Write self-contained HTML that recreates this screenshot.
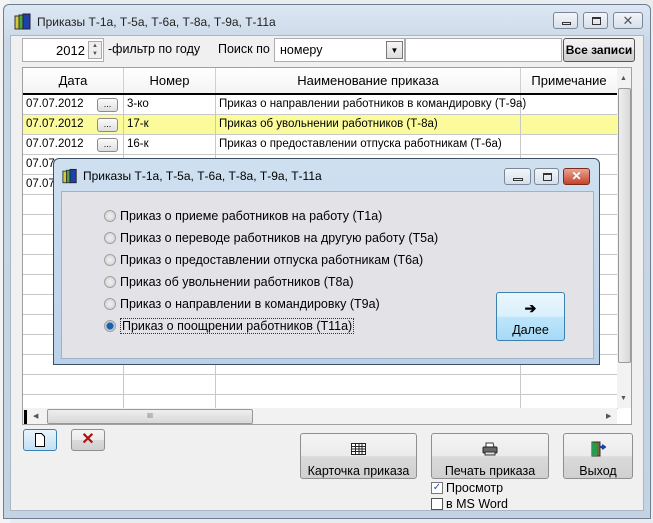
<!DOCTYPE html>
<html><head><meta charset="utf-8"><style>
*{box-sizing:border-box;margin:0;padding:0}
body{width:653px;height:523px;overflow:hidden;background:#e9ecef;font-family:"Liberation Sans",sans-serif;font-size:12px;color:#000;position:relative}
.abs{position:absolute}
.win{left:3px;top:4px;width:648px;height:515px;background:linear-gradient(#dce7f3,#c9d7e6 40px,#c4d3e3);border:1px solid #6e7f92;border-radius:6px 6px 0 0}
.client{left:10px;top:35px;width:634px;height:476px;background:#f0f0f0;border:1px solid #a9b6c4}
.tb{font-size:12px;color:#222}
.cbtn{position:absolute;top:0;width:25px;height:17px;border:1px solid #7b8796;border-radius:3px;background:linear-gradient(#f3f6fa,#d6dfe9)}
.inp{background:#fff;border:1px solid #abadb3}
.grid{left:22px;top:67px;width:610px;height:358px;background:#fff;border:1px solid #a0a0a0;overflow:hidden}
.row{position:absolute;left:0;width:595px;height:20px;border-bottom:1px solid #c8c8c8}
.c{position:absolute;top:0;height:20px;line-height:19px;font-size:11.5px;padding-left:3px;border-right:1px solid #c8c8c8;white-space:nowrap}
.hdr{position:absolute;top:0;height:26px;line-height:26px;font-size:13px;text-align:center;border-right:1px solid #d0d0d0;background:linear-gradient(#fff,#f3f3f3)}
.dots{position:absolute;left:74px;top:3px;width:21px;height:14px;border:1px solid #8a8a8a;border-radius:3px;background:linear-gradient(#fbfbfb,#dedede);font-size:9px;line-height:10px;text-align:center}
.btn{border:1px solid #8e8f8f;border-radius:3px;background:linear-gradient(#f4f4f4 0,#ebebeb 50%,#dadada 51%,#d0d0d0);text-align:center;font-size:12.5px}
.dlg{left:53px;top:158px;width:547px;height:207px;background:linear-gradient(#cfe0f0,#b9d1ea);border:1px solid #3d4f63;border-radius:6px 6px 0 0}
.dcl{left:7px;top:32px;width:533px;height:168px;background:#e3e3e7;border:1px solid #9fb2c6}
.rad{position:absolute;left:42px;font-size:12.5px;height:18px;line-height:18px}
.rad i{display:inline-block;width:12px;height:12px;border:1px solid #a0a0a0;border-radius:50%;background:radial-gradient(#f0f0f0,#d0d0d0);vertical-align:-2px;margin-right:4px}
</style></head><body>
<div class="abs" style="left:0;top:0;width:10px;height:523px;background:#f4f4f4"></div>
<div class="abs win">
  <svg class="abs" style="left:10px;top:8px" width="18" height="18" viewBox="0 0 18 18"><rect x="1" y="3" width="4" height="13" fill="#d6c83c" stroke="#333"/><rect x="5" y="2" width="4" height="14" fill="#4aa640" stroke="#333"/><rect x="9" y="1" width="7" height="15" fill="#1d3fb0" stroke="#222"/></svg>
  <div class="abs tb" style="left:33px;top:10px">Приказы Т-1а, Т-5а, Т-6а, Т-8а, Т-9а, Т-11а</div>
  <div class="abs" style="left:549px;top:7px;width:92px;height:18px">
    <div class="cbtn" style="left:0"><div style="position:absolute;left:8px;top:9px;width:9px;height:3px;border:1px solid #333"></div></div>
    <div class="cbtn" style="left:30px"><div style="position:absolute;left:8px;top:4px;width:9px;height:8px;border:1px solid #333;border-top-width:2px"></div></div>
    <div class="cbtn" style="left:60px;width:30px;color:#555;text-align:center;line-height:15px;font-size:13px">✕</div>
  </div>
</div>
<div class="abs client"></div>
<div class="abs inp" style="left:22px;top:38px;width:82px;height:24px"><span class="abs" style="left:33px;top:4px;font-size:13px">2012</span>
<div class="abs" style="left:65px;top:2px;width:14px;height:18px;border:1px solid #aaa;background:#eee;font-size:6px;line-height:8px;text-align:center;color:#555">▲<br>▼</div></div>
<div class="abs" style="left:108px;top:42px;font-size:12.5px">-фильтр по году</div>
<div class="abs" style="left:218px;top:42px;font-size:12.5px">Поиск по</div>
<div class="abs inp" style="left:274px;top:38px;width:131px;height:24px"><span class="abs" style="left:5px;top:4px;font-size:12.5px">номеру</span>
<div class="abs" style="left:111px;top:2px;width:17px;height:18px;border:1px solid #777;background:linear-gradient(#f6f6f6,#ddd);font-size:8px;text-align:center;line-height:17px">▼</div></div>
<div class="abs inp" style="left:405px;top:38px;width:157px;height:24px"></div>
<div class="abs btn" style="left:563px;top:38px;width:72px;height:24px;line-height:22px;font-weight:bold;font-size:12px;border-color:#555">Все записи</div>

<div class="abs grid">
  <div class="hdr" style="left:0;width:101px">Дата</div>
  <div class="hdr" style="left:101px;width:92px">Номер</div>
  <div class="hdr" style="left:193px;width:305px">Наименование приказа</div>
  <div class="hdr" style="left:498px;width:97px">Примечание</div>
  <div class="abs" style="left:0;top:25px;width:595px;height:2px;background:#000"></div>
  <div class="row" style="top:27px"><div class="c" style="left:0;width:101px">07.07.2012<div class="dots">...</div></div><div class="c" style="left:101px;width:92px">3-ко</div><div class="c" style="left:193px;width:305px">Приказ о направлении работников в командировку (Т-9а)</div></div>
  <div class="row" style="top:47px;background:#fbfb9c"><div class="c" style="left:0;width:101px">07.07.2012<div class="dots">...</div></div><div class="c" style="left:101px;width:92px">17-к</div><div class="c" style="left:193px;width:305px">Приказ об увольнении работников (Т-8а)</div></div>
  <div class="row" style="top:67px"><div class="c" style="left:0;width:101px">07.07.2012<div class="dots">...</div></div><div class="c" style="left:101px;width:92px">16-к</div><div class="c" style="left:193px;width:305px">Приказ о предоставлении отпуска работникам (Т-6а)</div></div>
  <div class="row" style="top:87px"><div class="c" style="left:0;width:101px">07.07.2012<div class="dots">...</div></div><div class="c" style="left:101px;width:92px">14-к</div><div class="c" style="left:193px;width:305px">Приказ о переводе работников на другую работу (Т-5а)</div></div>
  <div class="row" style="top:107px"><div class="c" style="left:0;width:101px">07.07.2012</div><div class="c" style="left:101px;width:92px"></div><div class="c" style="left:193px;width:305px"></div></div>
  <div class="row" style="top:127px"><div class="c" style="left:0;width:101px"></div><div class="c" style="left:101px;width:92px"></div><div class="c" style="left:193px;width:305px"></div></div>
  <div class="row" style="top:147px"><div class="c" style="left:0;width:101px"></div><div class="c" style="left:101px;width:92px"></div><div class="c" style="left:193px;width:305px"></div></div>
  <div class="row" style="top:167px"><div class="c" style="left:0;width:101px"></div><div class="c" style="left:101px;width:92px"></div><div class="c" style="left:193px;width:305px"></div></div>
  <div class="row" style="top:187px"><div class="c" style="left:0;width:101px"></div><div class="c" style="left:101px;width:92px"></div><div class="c" style="left:193px;width:305px"></div></div>
  <div class="row" style="top:207px"><div class="c" style="left:0;width:101px"></div><div class="c" style="left:101px;width:92px"></div><div class="c" style="left:193px;width:305px"></div></div>
  <div class="row" style="top:227px"><div class="c" style="left:0;width:101px"></div><div class="c" style="left:101px;width:92px"></div><div class="c" style="left:193px;width:305px"></div></div>
  <div class="row" style="top:247px"><div class="c" style="left:0;width:101px"></div><div class="c" style="left:101px;width:92px"></div><div class="c" style="left:193px;width:305px"></div></div>
  <div class="row" style="top:267px"><div class="c" style="left:0;width:101px"></div><div class="c" style="left:101px;width:92px"></div><div class="c" style="left:193px;width:305px"></div></div>
  <div class="row" style="top:287px"><div class="c" style="left:0;width:101px"></div><div class="c" style="left:101px;width:92px"></div><div class="c" style="left:193px;width:305px"></div></div>
  <div class="row" style="top:307px"><div class="c" style="left:0;width:101px"></div><div class="c" style="left:101px;width:92px"></div><div class="c" style="left:193px;width:305px"></div></div>
  <div class="row" style="top:327px;height:14px"><div class="c" style="left:0;width:101px"></div><div class="c" style="left:101px;width:92px"></div><div class="c" style="left:193px;width:305px"></div></div>
  <div class="abs" style="left:594px;top:0;width:15px;height:340px;background:#f2f2f2"></div>
  <div class="abs" style="left:595px;top:20px;width:13px;height:275px;border:1px solid #999;border-radius:2px;background:linear-gradient(90deg,#eee,#d8d8d8)"></div>
  <div class="abs" style="left:597px;top:7px;font-size:7px;color:#555">▲</div>
  <div class="abs" style="left:597px;top:327px;font-size:7px;color:#555">▼</div>
  <div class="abs" style="left:0;top:340px;width:594px;height:17px;background:#f2f2f2"></div>
  <div class="abs" style="left:1px;top:342px;width:3px;height:14px;background:#000"></div>
  <div class="abs" style="left:10px;top:344px;font-size:7px;color:#555">◀</div>
  <div class="abs" style="left:24px;top:341px;width:206px;height:15px;border:1px solid #999;border-radius:2px;background:linear-gradient(#eee,#d8d8d8);text-align:center;font-size:7px;line-height:13px;color:#666">III</div>
  <div class="abs" style="left:583px;top:344px;font-size:7px;color:#555">▶</div>
</div>

<div class="abs btn" style="left:23px;top:429px;width:34px;height:22px;border-color:#3c7fb1;background:linear-gradient(#e8f4fc,#c3e0f4)"><svg width="12" height="14" style="margin-top:3px" viewBox="0 0 12 14"><path d="M1.5 .5h6l3 3v10h-9z" fill="#fff" stroke="#000"/></svg></div>
<div class="abs btn" style="left:71px;top:429px;width:34px;height:22px;color:#b01010;font-weight:bold;font-size:16px;line-height:20px">✕</div>

<div class="abs btn" style="left:300px;top:433px;width:117px;height:46px"><svg style="margin-top:9px" width="15" height="12" viewBox="0 0 15 12"><rect x=".5" y=".5" width="14" height="11" fill="#fff" stroke="#222"/><path d="M.5 3.5h14M.5 6h14M.5 8.5h14M4.5 0v12M8 0v12M11 0v12" stroke="#222"/></svg><div style="margin-top:6px">Карточка приказа</div></div>
<div class="abs btn" style="left:431px;top:433px;width:118px;height:46px"><svg style="margin-top:8px" width="16" height="14" viewBox="0 0 16 14"><path d="M4 1h7l1 4H4z" fill="#fff" stroke="#333"/><rect x="1" y="5" width="14" height="6" rx="1" fill="#666" stroke="#222"/><rect x="3" y="10" width="10" height="3" fill="#ddd" stroke="#333"/></svg><div style="margin-top:5px">Печать приказа</div></div>
<div class="abs btn" style="left:563px;top:433px;width:70px;height:46px"><svg style="margin-top:7px" width="16" height="16" viewBox="0 0 16 16"><rect x="2" y="1" width="8" height="14" fill="#7a6a2a" stroke="#333"/><path d="M2 1l5 2v12l-5-0z" fill="#2a9a50"/><path d="M10 6h5M12 4l3 2-3 2" stroke="#1d3fb0" stroke-width="2" fill="none"/></svg><div style="margin-top:4px">Выход</div></div>

<div class="abs" style="left:431px;top:482px;width:12px;height:12px;border:1px solid #777;background:#fff;font-size:10px;line-height:10px;color:#2b4ea0;text-align:center">✓</div>
<div class="abs" style="left:446px;top:481px;font-size:12.5px">Просмотр</div>
<div class="abs" style="left:431px;top:498px;width:12px;height:12px;border:1px solid #555;background:#fff"></div>
<div class="abs" style="left:446px;top:497px;font-size:12.5px">в MS Word</div>

<div class="abs dlg">
  <svg class="abs" style="left:8px;top:9px" width="16" height="17" viewBox="0 0 18 18"><rect x="1" y="3" width="4" height="13" fill="#d6c83c" stroke="#333"/><rect x="5" y="2" width="4" height="14" fill="#4aa640" stroke="#333"/><rect x="9" y="1" width="7" height="15" fill="#1d3fb0" stroke="#222"/></svg>
  <div class="abs tb" style="left:29px;top:10px;color:#000">Приказы Т-1а, Т-5а, Т-6а, Т-8а, Т-9а, Т-11а</div>
  <div class="cbtn" style="left:450px;top:9px;width:27px"><div style="position:absolute;left:8px;top:9px;width:10px;height:3px;border:1px solid #333"></div></div>
  <div class="cbtn" style="left:480px;top:9px;width:25px"><div style="position:absolute;left:8px;top:4px;width:9px;height:8px;border:1px solid #333;border-top-width:2px"></div></div>
  <div class="cbtn" style="left:509px;top:9px;width:27px;background:linear-gradient(#e8a394,#c7432b);border-color:#7a2b20;color:#fff;text-align:center;line-height:15px;font-weight:bold">✕</div>
  <div class="abs dcl">
    <div class="rad" style="top:15px"><i></i>Приказ о приеме работников на работу (Т1а)</div>
    <div class="rad" style="top:37px"><i></i>Приказ о переводе работников на другую работу (Т5а)</div>
    <div class="rad" style="top:59px"><i></i>Приказ о предоставлении отпуска работникам (Т6а)</div>
    <div class="rad" style="top:81px"><i></i>Приказ об увольнении работников (Т8а)</div>
    <div class="rad" style="top:103px"><i></i>Приказ о направлении в командировку (Т9а)</div>
    <div class="rad" style="top:125px"><i style="background:radial-gradient(#1b5fa8 0 3px,#bcd 4px,#eee)"></i><span style="border:1px dotted #333;padding:0 1px">Приказ о поощрении работников (Т11а)</span></div>
    <div class="abs btn" style="left:434px;top:100px;width:69px;height:49px;border-color:#3c7fb1;background:linear-gradient(#eaf6fd 0,#d9f0fc 50%,#bee6fd 51%,#a7d9f5)"><div style="margin-top:7px;font-size:14px;font-weight:bold">➔</div><div style="margin-top:6px">Далее</div></div>
  </div>
</div>
</body></html>
